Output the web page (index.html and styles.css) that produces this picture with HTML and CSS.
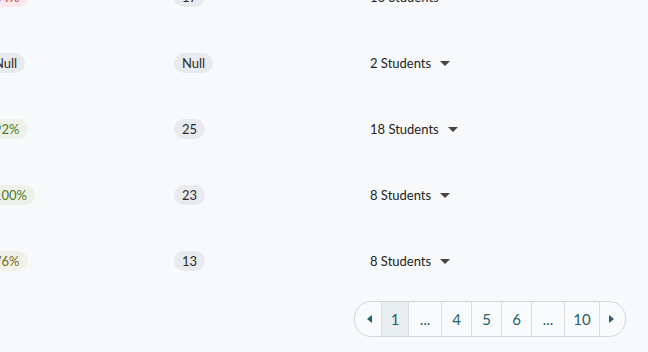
FILE: index.html
```html
<!DOCTYPE html>
<html lang="en">
<head>
    <meta charset="UTF-8">
    <meta name="viewport" content="width=device-width, initial-scale=1.0">
    <title>Classes</title>
    <link rel="stylesheet" href="styles.css">
</head>
<body>

<div class="table">
    <div class="row">
        <div class="cell"><span class="badge badge-red">34%</span></div>
        <div class="cell"><span class="badge">17</span></div>
        <div class="cell students">16 Students <span class="caret"></span></div>
    </div>
    <div class="row">
        <div class="cell"><span class="badge">Null</span></div>
        <div class="cell"><span class="badge">Null</span></div>
        <div class="cell students">2 Students <span class="caret"></span></div>
    </div>
    <div class="row">
        <div class="cell"><span class="badge badge-green">92%</span></div>
        <div class="cell"><span class="badge">25</span></div>
        <div class="cell students">18 Students <span class="caret"></span></div>
    </div>
    <div class="row">
        <div class="cell"><span class="badge badge-green">100%</span></div>
        <div class="cell"><span class="badge">23</span></div>
        <div class="cell students">8 Students <span class="caret"></span></div>
    </div>
    <div class="row">
        <div class="cell"><span class="badge badge-olive">76%</span></div>
        <div class="cell"><span class="badge">13</span></div>
        <div class="cell students">8 Students <span class="caret"></span></div>
    </div>
</div>

<div class="pager">
    <div class="pagination">
        <button class="page arrow"><span class="tri tri-left"></span></button>
        <button class="page active">1</button>
        <button class="page dots">...</button>
        <button class="page">4</button>
        <button class="page">5</button>
        <button class="page">6</button>
        <button class="page dots">...</button>
        <button class="page wide">10</button>
        <button class="page arrow"><span class="tri tri-right"></span></button>
    </div>
</div>

</body>
</html>
```

FILE: styles.css
```css
body {
    font-family: Lato, "Open Sans", sans-serif;
    margin: 0;
    background: #f8f9fb;
    color: #222;
    overflow: hidden;
}
.table {
    margin: -36px 0 0 -14px;
}
.row {
    display: grid;
    grid-template-columns: 188px 196px 1fr;
    align-items: center;
    height: 66px;
}
.cell {
    font-size: 13px;
    display: flex;
    align-items: center;
}
.badge {
    display: inline-block;
    height: 20px;
    line-height: 20px;
    padding: 0 8px;
    border-radius: 10px;
    background: #e9eaee;
    color: #2b2b2b;
    font-size: 13px;
}
.badge-red {
    background: #fbe8ec;
    color: #c62f2f;
}
.badge-green {
    background: #edf1e9;
    color: #4b7a20;
}
.badge-olive {
    background: #f1f0e9;
    color: #76691c;
}
.students {
    color: #222;
}
.caret {
    display: inline-block;
    margin-left: 9px;
    margin-top: 1px;
    border-left: 5px solid transparent;
    border-right: 5px solid transparent;
    border-top: 5px solid #444;
}
.pager {
    display: flex;
    justify-content: flex-end;
    padding: 7px 22px 0 0;
}
.pagination {
    display: flex;
    height: 34px;
    border: 1px solid #d3d7db;
    border-radius: 17px;
    overflow: hidden;
    background: #f9fafb;
}
.page {
    font-family: Lato, "Open Sans", sans-serif;
    font-size: 15px;
    color: #24606c;
    background: transparent;
    border: none;
    border-left: 1px solid #dadde1;
    padding: 0;
    width: 30px;
    display: flex;
    align-items: center;
    justify-content: center;
}
.page:first-child {
    border-left: none;
}
.page.arrow {
    width: 26px;
}
.page.dots {
    width: 33px;
}
.page.wide {
    width: 35px;
}
.page.active {
    width: 27px;
    background: #e8edef;
}
.tri {
    display: inline-block;
    border-top: 4px solid transparent;
    border-bottom: 4px solid transparent;
}
.tri-left {
    border-right: 5px solid #24606c;
    margin-left: 2px;
}
.tri-right {
    border-left: 5px solid #24606c;
    margin-right: 2px;
}
```
